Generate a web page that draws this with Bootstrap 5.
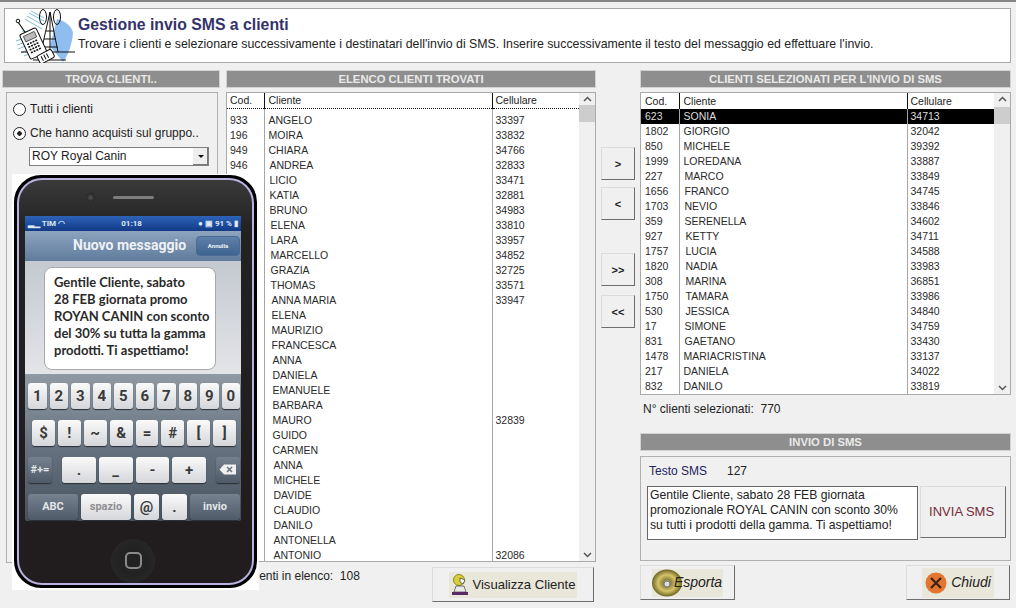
<!DOCTYPE html>
<html lang="it"><head><meta charset="utf-8"><title>Gestione invio SMS a clienti</title>
<link href="https://cdn.jsdelivr.net/npm/bootstrap@5.3.0/dist/css/bootstrap.min.css" rel="stylesheet">
<style>
html,body{height:608px;overflow:hidden}
body{background:#f0f0f0;font-family:"Liberation Sans",Arial,sans-serif;font-size:12px;color:#222;position:relative}
.striscia{height:2px;background:#858585;margin-bottom:6px}
.testata{height:55px;margin:0 5px 7px 4px;background:#fff;border:1px solid #a8a8a8;padding-left:3px}
.testata h1{font-size:15.8px;font-weight:700;color:#33336b;margin:0 0 3px;line-height:19px}
.testata p{font-size:12.34px;margin:0;line-height:14px;color:#222}
.testo-testata{padding-bottom:5px;margin-left:1px}
.colonna-a{width:218px;margin-left:2px}
.colonna-b{width:370px;margin-left:6px}
.colonna-c{width:44px}
.colonna-d{width:371px}
.titolo{height:18px;background:#8e8e8e;outline:1px solid #d2d2d2;outline-offset:-1px;color:#e9e9e9;font-weight:700;font-size:11.3px;line-height:18px;text-align:center;margin-bottom:4px}
.riquadro{height:471px;margin:0 2px 0 4px;border:1px solid #b0b0b0;padding:4px 0 0 6px}
.scelta{height:24px;font-size:12px;gap:4px}
.scelta .form-check-input{width:13px;height:13px;margin:0;border:1px solid #222;background-color:#fff;background-image:none;flex:none}
.scelta .form-check-input:checked{background-color:#fff;background-image:radial-gradient(circle,#222 0 2px,transparent 2.5px);border-color:#222}
.tendina{width:180px;height:19px;margin:2px 0 0 16px;background:#fff;border:1px solid #808080;line-height:17px;padding-left:2px;font-size:12px}
.tendina b{width:16px;height:17px;background:#eee;border-left:1px solid #fff;box-shadow:inset -1px -1px 0 #777;display:flex;align-items:center;justify-content:center}
.tendina b::after{content:"";border:3px solid transparent;border-top:3px solid #111;margin-top:3px}
.elenco{border:1px solid #aaa;background:#fff}
.elenco-m{height:470px}
.elenco-d{height:303px}
.corpo{flex:1;min-width:0;overflow:hidden}
.tabella{table-layout:fixed;width:100%;font-size:10.5px;color:#2a2a2a;line-height:15px;margin:0}
.tabella>:not(caption)>*>*{padding:0;height:15px;background:transparent;box-shadow:none;border:0;white-space:nowrap;overflow:hidden;color:inherit;vertical-align:middle}
.tabella>tbody>tr>td+td{border-left:1px solid #a6a6a6}
.tabella>thead>tr>th{font-weight:400;height:16px;color:#222}
.tabella>thead>tr>th+th{border-left:1px solid #111}
.tabella-m>thead>tr>th{border-bottom:1px dotted #111;height:15px}
.tabella-m>tbody>tr:first-child>td{height:19px;padding-top:4px}
.tabella>*>tr>*:nth-child(1){padding-left:3px}
.tabella>*>tr>*:nth-child(2){padding-left:4px}
.tabella>*>tr>*:nth-child(3){padding-left:3px}
.tabella-d>*>tr>*:nth-child(1){padding-left:4px}
.tabella>tbody>.scelto>*{background:#000;color:#ddd}
.n1{text-indent:1px}.n2{text-indent:2px}.n3{text-indent:3px}.n4{text-indent:4px}.n5{text-indent:5px}
.barra{width:16px;background:#f0f0f0;padding-top:3px;padding-bottom:3px}
.barra svg{display:block;margin:0 auto}
.cursore{height:17px;background:#cdcdcd;margin:3px 0 auto}
.barra-d .cursore{margin-top:5px}
.tasto{border-radius:0;padding:0;background:#f0f0f0;border:1px solid;border-color:#dcdcdc #6e6e6e #6e6e6e #dcdcdc;color:#222;--bs-btn-hover-bg:#f0f0f0}
.freccia{width:34px;height:33px;margin-left:5px;font-weight:700;font-size:11px;display:block;line-height:30px}
.piede-m{height:40px;padding:5px 2px 0 5px}
.tasto-v{width:162px;height:35px}
.fondino{background:#e9e7da;display:inline-flex;align-items:center}
.fondino-v{height:26px;padding:0 1px 0 2px;font-size:13.1px;gap:3px}
.conta-d{margin:7px 0 0 3px;height:31px;line-height:14px}
.riquadro-sms{height:105px;border:1px solid #b0b0b0;padding:7px 4px 0 6px;margin-top:5px}
.etichetta{color:#23235f;margin-left:2px;width:78px}
.righe-sms{height:15px;line-height:15px;margin-bottom:7px}
.testo-sms{width:272px;height:54px;background:#fff;border:1px solid #666;padding:1px 2px;line-height:15px;font-size:12.2px;white-space:nowrap;overflow:hidden}
.tasto-invia{width:86px;height:52px;margin-left:2px;color:#752a36;font-size:13px;padding-right:3px}
.piede-d{margin-top:4px}
.tasto-e{width:95px;height:35px;font-style:italic;font-size:14px}
.tasto-c{width:104px;height:35px;font-style:italic;font-size:14px;margin-right:1px}
.fondino-e{height:28px;padding-right:1px}
.fondino-e svg{margin-right:-10px}
.fondino-c{height:30px;padding:0 3px;gap:4px}
.telefono{position:absolute;left:12px;top:174px;width:247px;height:416px;background:#fff;padding:1px 2px 2px}
.scocca{height:413px;border:3px solid #000;border-radius:27px;background:#000}
.bordino{height:100%;border:2px solid #b9b1de;border-radius:25px;background:linear-gradient(#3a3a3a,#222 12%,#211c1d);padding:0 11px 0 6px}
.alto{height:37px;gap:18px;padding-left:61px}
.foro{width:9px;height:9px;border-radius:50%;background:radial-gradient(circle,#555,#111)}
.altop{width:41px;height:3px;border-radius:2px;background:#7c7c7c}
.schermo{height:305px;font-family:Roboto,"Liberation Sans",sans-serif}
.stato{height:15px;background:linear-gradient(#2d63b8,#123a86);color:#dfe8f5;font-weight:700;font-size:8px;line-height:15px;padding:0 3px}
.nav-sms{height:30px;background:linear-gradient(#8ea4bf,#5f7b9c);color:#eef1f6;font-weight:700;font-size:14px;padding:0 1px 0 48px}
.nav-sms span{white-space:nowrap}
.annulla{width:44px;height:20px;background:linear-gradient(#5e7fa7,#3f6491);border:1px solid #4a6a93;border-radius:4px;font-size:6px;line-height:18px;text-align:center;margin-left:10px;flex:none}
.area{height:113px;background:linear-gradient(#c4c9d0,#e3e4e8);padding:6px 25px 0 19px}
.fumetto{height:103px;background:#fff;border:1px solid #a9a9a9;border-radius:8px;font-family:Lato,"Liberation Sans",sans-serif;font-weight:700;font-size:13px;line-height:17px;color:#2a2a2a;padding:6px 0 0 9px;white-space:nowrap}
.tastiera{height:147px;background:linear-gradient(#8f9aa5,#66727f 50%,#47525e);padding:9px 1px 0 3px;gap:11px;border-radius:0 0 2px 2px}
.fila{height:26px;gap:3px}
.chiave{flex:1;background:linear-gradient(#fafafa,#d5d6da);border-radius:3px;box-shadow:0 1px 1px #2a2f36;color:#3a3a3a;font-weight:700;font-size:15px;display:flex;align-items:center;justify-content:center;min-width:0}
.fila-2{padding:0 4px}
.grigia{background:linear-gradient(#75818e,#4e5a67);color:#e3e6ea;font-size:11px}
.tenue{color:#8f8f94;font-size:11px}
.x1{flex:0 0 24px}.x2{flex:0 0 50px}.sp{margin-left:7px}.sd{margin-left:7px}
.casa{height:64px}
.tondo{width:44px;height:44px;border-radius:50%;background:radial-gradient(circle,#222 40%,#2e2b2c);margin:18px 0 0 0}
.tondo i{width:17px;height:17px;border:2px solid #8a8a8a;border-radius:5px;display:block}
</style></head>
<body>
<div class="striscia"></div>
<header class="testata d-flex align-items-center">
<svg width="69" height="55" viewBox="8 7 69 55" class="flex-shrink-0 me-0" aria-hidden="true">
<path d="M57 18C66 20 72 26 73 32C72 44 68 54 63 61L50 45Z" fill="#8fbdf0"/>
<g stroke="#7fc0d8" stroke-width="1"><path d="M25 18L42 28M27 15L43 24M29 12L44 20M31 10L44 17M22 30L40 33M16 40L25 37M17 44L26 41M18 48L28 44M21 52L32 47M24 55L36 50"/></g>
<g stroke="#111" fill="none" stroke-width="1"><ellipse cx="43" cy="16" rx="3.5" ry="7.5"/><ellipse cx="57" cy="16" rx="3.5" ry="7.5"/><path d="M50 11L41 51M50 11L58 51M46 30H54M44 38H56M42 46H58M50 11V51M21 51H75M33 59H66"/></g>
<path d="M18 21L27 34" stroke="#111" stroke-width="1.2"/><circle cx="18" cy="20" r="1.8" fill="#fff" stroke="#111"/>
<g transform="rotate(-25 33 42)"><rect x="24" y="29" width="18" height="27" rx="2" fill="#fff" stroke="#111"/><rect x="27" y="32" width="12" height="6" fill="#bbb" stroke="#111" stroke-width=".6"/><path d="M27 41h12M27 44h12M27 47h12M27 50h12" stroke="#111" stroke-width="1.6" stroke-dasharray="2 1"/></g>
<g transform="rotate(-28 46 56)"><rect x="38" y="51" width="16" height="9" rx="2" fill="#fff" stroke="#111"/><path d="M42 53v5M45 53v5M48 53v5" stroke="#111"/></g>
</svg>
<div class="testo-testata">
<h1>Gestione invio SMS a clienti</h1>
<p>Trovare i clienti e selezionare successivamente i destinatari dell'invio di SMS. Inserire successivamente il testo del messaggio ed effettuare l'invio.</p>
</div>
</header>
<main class="d-flex">
<section class="colonna-a">
<div class="titolo">TROVA CLIENTI..</div>
<div class="riquadro">
<label class="scelta d-flex align-items-center"><input class="form-check-input" type="radio" name="t">Tutti i clienti</label>
<label class="scelta d-flex align-items-center"><input class="form-check-input" type="radio" name="t" checked>Che hanno acquisti sul gruppo..</label>
<div class="tendina d-flex justify-content-between"><span>ROY Royal Canin</span><b></b></div>
</div>
</section>
<section class="colonna-b">
<div class="titolo">ELENCO CLIENTI TROVATI</div>
<div class="elenco elenco-m d-flex">
<div class="corpo">
<table class="table table-borderless tabella tabella-m">
<colgroup><col style="width:37px"><col style="width:228px"><col></colgroup>
<thead><tr><th>Cod.</th><th>Cliente</th><th>Cellulare</th></tr></thead>
<tbody>
<tr><td>933</td><td>ANGELO</td><td>33397</td></tr>
<tr><td>196</td><td>MOIRA</td><td>33832</td></tr>
<tr><td>949</td><td>CHIARA</td><td>34766</td></tr>
<tr><td>946</td><td class="n1">ANDREA</td><td>32833</td></tr>
<tr><td></td><td class="n1">LICIO</td><td>33471</td></tr>
<tr><td></td><td class="n1">KATIA</td><td>32881</td></tr>
<tr><td></td><td class="n1">BRUNO</td><td>34983</td></tr>
<tr><td></td><td class="n2">ELENA</td><td>33810</td></tr>
<tr><td></td><td class="n2">LARA</td><td>33957</td></tr>
<tr><td></td><td class="n2">MARCELLO</td><td>34852</td></tr>
<tr><td></td><td class="n2">GRAZIA</td><td>32725</td></tr>
<tr><td></td><td class="n2">THOMAS</td><td>33571</td></tr>
<tr><td></td><td class="n3">ANNA MARIA</td><td>33947</td></tr>
<tr><td></td><td class="n3">ELENA</td><td></td></tr>
<tr><td></td><td class="n3">MAURIZIO</td><td></td></tr>
<tr><td></td><td class="n3">FRANCESCA</td><td></td></tr>
<tr><td></td><td class="n4">ANNA</td><td></td></tr>
<tr><td></td><td class="n4">DANIELA</td><td></td></tr>
<tr><td></td><td class="n4">EMANUELE</td><td></td></tr>
<tr><td></td><td class="n4">BARBARA</td><td></td></tr>
<tr><td></td><td class="n4">MAURO</td><td>32839</td></tr>
<tr><td></td><td class="n4">GUIDO</td><td></td></tr>
<tr><td></td><td class="n4">CARMEN</td><td></td></tr>
<tr><td></td><td class="n5">ANNA</td><td></td></tr>
<tr><td></td><td class="n5">MICHELE</td><td></td></tr>
<tr><td></td><td class="n5">DAVIDE</td><td></td></tr>
<tr><td></td><td class="n5">CLAUDIO</td><td></td></tr>
<tr><td></td><td class="n5">DANILO</td><td></td></tr>
<tr><td></td><td class="n5">ANTONELLA</td><td></td></tr>
<tr><td></td><td class="n5">ANTONIO</td><td>32086</td></tr>
</tbody></table>
</div>
<div class="barra d-flex flex-column">
<svg width="9" height="6" viewBox="0 0 9 6"><path d="M1 5L4.5 1.5L8 5" fill="none" stroke="#555" stroke-width="1.5"/></svg>
<div class="cursore"></div>
<svg width="9" height="6" viewBox="0 0 9 6"><path d="M1 1L4.5 4.5L8 1" fill="none" stroke="#555" stroke-width="1.5"/></svg>
</div>
</div>
<div class="piede-m d-flex justify-content-between align-items-start">
<span>N° clienti in elenco:&nbsp; 108</span>
<button class="btn tasto tasto-v d-flex align-items-center justify-content-center" type="button"><span class="fondino fondino-v">
<svg width="18" height="24" viewBox="0 0 18 24" aria-hidden="true"><circle cx="8" cy="7" r="5.5" fill="#d9cf3a" stroke="#8c8a20"/><path d="M9 5l5 2-2 4-3-2z" fill="#fff" stroke="#333" stroke-width=".7"/><path d="M5 13h8l2 6H3z" fill="#e8e8e8" stroke="#444" stroke-width=".7"/><path d="M1 19h16v3H1z" fill="#5a2a66"/></svg>Visualizza Cliente</span></button>
</div>
</section>
<nav class="colonna-c">
<button class="btn tasto freccia" type="button" style="margin-top:77px">&gt;</button>
<button class="btn tasto freccia" type="button" style="margin-top:7px">&lt;</button>
<button class="btn tasto freccia" type="button" style="margin-top:33px">&gt;&gt;</button>
<button class="btn tasto freccia" type="button" style="margin-top:9px">&lt;&lt;</button>
</nav>
<section class="colonna-d">
<div class="titolo">CLIENTI SELEZIONATI PER L'INVIO DI SMS</div>
<div class="elenco elenco-d d-flex">
<div class="corpo">
<table class="table table-borderless tabella tabella-d">
<colgroup><col style="width:38px"><col style="width:228px"><col></colgroup>
<thead><tr><th>Cod.</th><th>Cliente</th><th>Cellulare</th></tr></thead>
<tbody>
<tr class="scelto"><td>623</td><td>SONIA</td><td>34713</td></tr>
<tr><td>1802</td><td>GIORGIO</td><td>32042</td></tr>
<tr><td>850</td><td>MICHELE</td><td>39392</td></tr>
<tr><td>1999</td><td>LOREDANA</td><td>33887</td></tr>
<tr><td>227</td><td class="n1">MARCO</td><td>33849</td></tr>
<tr><td>1656</td><td class="n1">FRANCO</td><td>34745</td></tr>
<tr><td>1703</td><td class="n1">NEVIO</td><td>33846</td></tr>
<tr><td>359</td><td class="n1">SERENELLA</td><td>34602</td></tr>
<tr><td>927</td><td class="n2">KETTY</td><td>34711</td></tr>
<tr><td>1757</td><td class="n2">LUCIA</td><td>34588</td></tr>
<tr><td>1820</td><td class="n2">NADIA</td><td>33983</td></tr>
<tr><td>308</td><td class="n2">MARINA</td><td>36851</td></tr>
<tr><td>1750</td><td class="n2">TAMARA</td><td>33986</td></tr>
<tr><td>530</td><td class="n2">JESSICA</td><td>34840</td></tr>
<tr><td>17</td><td class="n1">SIMONE</td><td>34759</td></tr>
<tr><td>831</td><td class="n1">GAETANO</td><td>33430</td></tr>
<tr><td>1478</td><td>MARIACRISTINA</td><td>33137</td></tr>
<tr><td>217</td><td>DANIELA</td><td>34022</td></tr>
<tr><td>832</td><td>DANILO</td><td>33819</td></tr>
</tbody></table>
</div>
<div class="barra barra-d d-flex flex-column">
<svg width="9" height="6" viewBox="0 0 9 6"><path d="M1 5L4.5 1.5L8 5" fill="none" stroke="#555" stroke-width="1.5"/></svg>
<div class="cursore"></div>
<svg width="9" height="6" viewBox="0 0 9 6"><path d="M1 1L4.5 4.5L8 1" fill="none" stroke="#555" stroke-width="1.5"/></svg>
</div>
</div>
<div class="conta-d">N° clienti selezionati:&nbsp; 770</div>
<div class="titolo">INVIO DI SMS</div>
<div class="riquadro-sms">
<div class="righe-sms d-flex"><span class="etichetta">Testo SMS</span><span>127</span></div>
<div class="d-flex align-items-start">
<div class="testo-sms">Gentile Cliente, sabato 28 FEB giornata<br>promozionale ROYAL CANIN con sconto 30%<br>su tutti i prodotti della gamma. Ti aspettiamo!</div>
<button class="btn tasto tasto-invia" type="button">INVIA SMS</button>
</div>
</div>
<div class="piede-d d-flex justify-content-between">
<button class="btn tasto tasto-e d-flex align-items-center justify-content-center" type="button"><span class="fondino fondino-e">
<svg width="32" height="28" viewBox="0 0 32 28" aria-hidden="true"><defs><radialGradient id="oro"><stop offset="0" stop-color="#f5f0c8"/><stop offset=".25" stop-color="#8b8040"/><stop offset=".6" stop-color="#d6c468"/><stop offset="1" stop-color="#6e6426"/></radialGradient></defs><ellipse cx="15" cy="14" rx="15" ry="13.5" fill="url(#oro)"/><circle cx="15" cy="15" r="3" fill="#ddd" stroke="#777"/></svg>Esporta</span></button>
<button class="btn tasto tasto-c d-flex align-items-center justify-content-center" type="button"><span class="fondino fondino-c">
<svg width="22" height="22" viewBox="0 0 22 22" aria-hidden="true"><circle cx="11" cy="11" r="10.5" fill="#e2752f"/><path d="M6 6L16 16M16 6L6 16" stroke="#3a2418" stroke-width="2.2"/></svg>Chiudi</span></button>
</div>
</section>
</main>
<aside class="telefono">
<div class="scocca"><div class="bordino d-flex flex-column">
<div class="alto d-flex align-items-center"><span class="foro"></span><span class="altop"></span></div>
<div class="schermo">
<div class="stato d-flex justify-content-between"><span>▂▁ TIM ◠</span><span>01:18</span><span>● ▣ 91 % ▮</span></div>
<div class="nav-sms d-flex align-items-center"><span>Nuovo messaggio</span><span class="annulla">Annulla</span></div>
<div class="area"><div class="fumetto">Gentile Cliente, sabato<br>28 FEB giornata promo<br>ROYAN CANIN con sconto<br>del 30% su tutta la gamma<br>prodotti. Ti aspettiamo!</div></div>
<div class="tastiera d-flex flex-column">
<div class="fila d-flex"><span class="chiave">1</span><span class="chiave">2</span><span class="chiave">3</span><span class="chiave">4</span><span class="chiave">5</span><span class="chiave">6</span><span class="chiave">7</span><span class="chiave">8</span><span class="chiave">9</span><span class="chiave">0</span></div>
<div class="fila fila-2 d-flex"><span class="chiave">$</span><span class="chiave">!</span><span class="chiave">~</span><span class="chiave">&amp;</span><span class="chiave">=</span><span class="chiave">#</span><span class="chiave">[</span><span class="chiave">]</span></div>
<div class="fila d-flex"><span class="chiave grigia x1">#+=</span><span class="chiave sp">.</span><span class="chiave">_</span><span class="chiave">-</span><span class="chiave">+</span><span class="chiave grigia x1 sd"><svg width="18" height="11" viewBox="0 0 18 11" aria-hidden="true"><path d="M5 0.5H17V10.5H5L0.5 5.5Z" fill="#eef0f2"/><path d="M8 3L13 8M13 3L8 8" stroke="#6a7480" stroke-width="1.6"/></svg></span></div>
<div class="fila d-flex"><span class="chiave grigia x2">ABC</span><span class="chiave tenue x2">spazio</span><span class="chiave">@</span><span class="chiave">.</span><span class="chiave grigia x2">invio</span></div>
</div>
</div>
<div class="casa d-flex justify-content-center"><span class="tondo d-flex align-items-center justify-content-center"><i></i></span></div>
</div></div>
</aside>
<script src="https://cdn.jsdelivr.net/npm/bootstrap@5.3.0/dist/js/bootstrap.bundle.min.js"></script>
</body></html>
